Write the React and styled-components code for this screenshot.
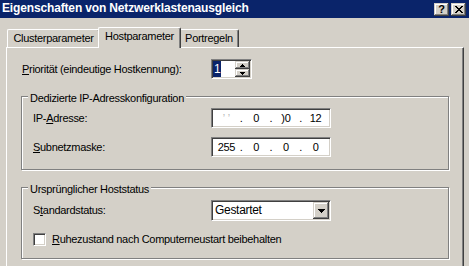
import React from 'react'
import styled, { createGlobalStyle } from 'styled-components'

const GlobalStyle = createGlobalStyle`
  html, body {
    margin: 0;
    padding: 0;
    background: #d4d0c8;
  }
  body {
    font-family: "Liberation Sans", Arial, sans-serif;
    font-size: 11px;
    letter-spacing: -0.3px;
    color: #000;
  }
`

const Window = styled.div`
  width: 469px;
  height: 266px;
  overflow: hidden;
  background: #d4d0c8;
  display: flex;
  flex-direction: column;
`

const TitleBar = styled.div`
  flex: 0 0 18px;
  background: #0a246a;
  display: flex;
  align-items: flex-start;
  padding: 0 3px 0 2px;
`

const Title = styled.div`
  flex: 1;
  color: #fff;
  font-weight: bold;
  font-size: 12px;
  line-height: 16px;
  letter-spacing: -0.15px;
  white-space: nowrap;
`

const CaptionButtons = styled.div`
  display: flex;
  gap: 2px;
  margin-top: 3px;
`

// classic raised 3d button look
const raised = `
  background: #d4d0c8;
  box-shadow: inset -1px -1px #404040, inset 1px 1px #d4d0c8,
    inset -2px -2px #808080, inset 2px 2px #fff;
`

const CaptionButton = styled.div`
  ${raised}
  width: 15px;
  height: 13px;
  display: flex;
  align-items: center;
  justify-content: center;
  font-weight: bold;
  font-size: 11px;
  line-height: 11px;
  letter-spacing: 0;
`

const Content = styled.div`
  flex: 1;
  padding: 9px 5px 0 6px;
  display: flex;
  flex-direction: column;
`

const TabStrip = styled.div`
  height: 20px;
  display: flex;
  align-items: flex-end;
  padding-left: 1px;
  position: relative;
  z-index: 1;
`

const Tab = styled.div`
  box-sizing: border-box;
  width: ${(p) => p.$width}px;
  height: ${(p) => (p.$active ? 21 : 18)}px;
  margin: ${(p) => (p.$active ? '0 -2px -1px' : '0')};
  padding-top: 2px;
  text-align: center;
  line-height: 13px;
  white-space: nowrap;
  background: #d4d0c8;
  border-top: 1px solid #fff;
  border-left: 1px solid #fff;
  border-right: 1px solid #404040;
  border-radius: 2px 2px 0 0;
  box-shadow: inset -1px 0 #808080;
  position: relative;
  z-index: ${(p) => (p.$active ? 1 : 0)};
`

const Panel = styled.div`
  flex: 1;
  border-top: 1px solid #fff;
  border-left: 1px solid #fff;
  border-right: 1px solid #404040;
  box-shadow: inset -1px 0 #808080;
  padding: 11px 14px 0;
  display: flex;
  flex-direction: column;
`

const Row = styled.div`
  display: flex;
  align-items: center;
  margin-top: ${(p) => p.$gap || 0}px;
`

const Label = styled.div`
  box-sizing: border-box;
  flex: 0 0 ${(p) => p.$width}px;
  padding-left: ${(p) => p.$indent || 0}px;
  line-height: 13px;
  white-space: nowrap;
`

const Key = styled.span`
  text-decoration: underline;
`

const Group = styled.div`
  border: 1px solid #808080;
  box-shadow: inset 1px 1px #fff, 1px 1px #fff;
  margin-top: ${(p) => p.$gap}px;
  padding: 0 0 12px 11px;
  display: flex;
  flex-direction: column;
`

const Legend = styled.div`
  align-self: flex-start;
  margin: -5px 0 0 -5px;
  padding: 0 2px;
  background: #d4d0c8;
  line-height: 13px;
  white-space: nowrap;
`

const Sunken = styled.div`
  box-sizing: border-box;
  width: ${(p) => p.$width}px;
  height: ${(p) => p.$height || 20}px;
  background: #fff;
  border: 1px solid;
  border-color: #808080 #fff #fff #808080;
  box-shadow: inset 1px 1px #404040, inset -1px -1px #d4d0c8;
  padding: 1px;
  display: flex;
  align-items: stretch;
`

const Selected = styled.span`
  align-self: center;
  height: 16px;
  line-height: 16px;
  padding: 0 1px;
  background: #0a246a;
  color: #fff;
  font-size: 12px;
`

const SpinButtons = styled.div`
  margin-left: auto;
  display: flex;
  flex-direction: column;
`

const SpinButton = styled.div`
  ${raised}
  width: 15px;
  flex: 1;
  display: flex;
  align-items: center;
  justify-content: center;
`

const Octet = styled.span`
  flex: 1;
  text-align: center;
  line-height: 16px;
  white-space: nowrap;
`

const Dot = styled.span`
  flex: 0 0 3px;
  text-align: center;
  line-height: 16px;
`

const Faint = styled.span`
  color: #b8b8b8;
`

const ComboText = styled.span`
  flex: 1;
  padding-left: 2px;
  line-height: 17px;
  font-size: 12px;
`

const DropButton = styled.div`
  ${raised}
  width: 16px;
  display: flex;
  align-items: center;
  justify-content: center;
`

const CheckBox = styled(Sunken)`
  width: 13px;
  height: 13px;
`

const CheckLabel = styled.span`
  margin-left: 6px;
  line-height: 13px;
  white-space: nowrap;
`

const CloseGlyph = () => (
  <svg width="8" height="7" viewBox="0 0 8 7" shapeRendering="crispEdges">
    <path
      fill="#000"
      d="M0 0h2v1h-2z M6 0h2v1h-2z M1 1h2v1h-2z M5 1h2v1h-2z M2 2h4v1h-4z M3 3h2v1h-2z M2 4h4v1h-4z M1 5h2v1h-2z M5 5h2v1h-2z M0 6h2v1h-2z M6 6h2v1h-2z"
    />
  </svg>
)

const SpinArrow = ({ down }) => (
  <svg width="5" height="3" viewBox="0 0 5 3" shapeRendering="crispEdges">
    <path
      fill="#000"
      d={down ? 'M0 0h5v1h-5z M1 1h3v1h-3z M2 2h1v1h-1z' : 'M2 0h1v1h-1z M1 1h3v1h-3z M0 2h5v1h-5z'}
    />
  </svg>
)

const ComboArrow = () => (
  <svg width="7" height="4" viewBox="0 0 7 4" shapeRendering="crispEdges">
    <path fill="#000" d="M0 0h7v1h-7z M1 1h5v1h-5z M2 2h3v1h-3z M3 3h1v1h-1z" />
  </svg>
)

const IpAddress = ({ parts }) => (
  <Sunken $width={120}>
    {parts.map((part, i) => (
      <React.Fragment key={i}>
        {i > 0 && <Dot>.</Dot>}
        <Octet>{part}</Octet>
      </React.Fragment>
    ))}
  </Sunken>
)

const App = () => {
  return (
    <>
      <GlobalStyle />
      <Window>
        <TitleBar>
          <Title>Eigenschaften von Netzwerklastenausgleich</Title>
          <CaptionButtons>
            <CaptionButton>?</CaptionButton>
            <CaptionButton>
              <CloseGlyph />
            </CaptionButton>
          </CaptionButtons>
        </TitleBar>
        <Content>
          <TabStrip>
            <Tab $width={93}>Clusterparameter</Tab>
            <Tab $width={83} $active>
              Hostparameter
            </Tab>
            <Tab $width={60}>Portregeln</Tab>
          </TabStrip>
          <Panel>
            <Row>
              <Label $width={190} $indent={1}>
                <Key>P</Key>riorität (eindeutige Hostkennung):
              </Label>
              <Sunken $width={41}>
                <Selected>1</Selected>
                <SpinButtons>
                  <SpinButton>
                    <SpinArrow />
                  </SpinButton>
                  <SpinButton>
                    <SpinArrow down />
                  </SpinButton>
                </SpinButtons>
              </Sunken>
            </Row>

            <Group $gap={17}>
              <Legend>Dedizierte IP-Adresskonfiguration</Legend>
              <Row $gap={3}>
                <Label $width={178}>
                  IP-<Key>A</Key>dresse:
                </Label>
                <IpAddress
                  parts={[<Faint key="a">&#700; &#700;</Faint>, '0', ')0', '12']}
                />
              </Row>
              <Row $gap={9}>
                <Label $width={178}>
                  <Key>S</Key>ubnetzmaske:
                </Label>
                <IpAddress parts={['255', '0', '0', '0']} />
              </Row>
            </Group>

            <Group $gap={17}>
              <Legend>Ursprünglicher Hoststatus</Legend>
              <Row $gap={4}>
                <Label $width={178}>
                  S<Key>t</Key>andardstatus:
                </Label>
                <Sunken $width={120} $height={21}>
                  <ComboText>Gestartet</ComboText>
                  <DropButton>
                    <ComboArrow />
                  </DropButton>
                </Sunken>
              </Row>
              <Row $gap={12}>
                <CheckBox />
                <CheckLabel>
                  <Key>R</Key>uhezustand nach Computerneustart beibehalten
                </CheckLabel>
              </Row>
            </Group>
          </Panel>
        </Content>
      </Window>
    </>
  )
}

export default App
